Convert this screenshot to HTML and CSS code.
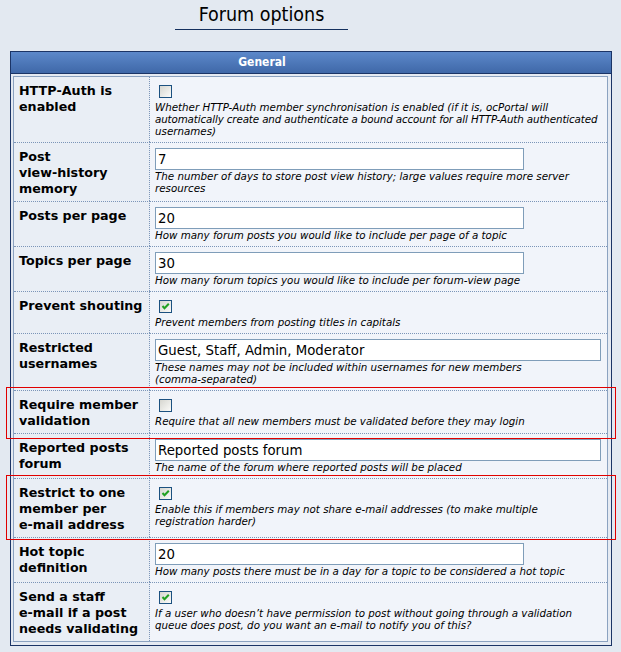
FILE: index.html
```html
<!DOCTYPE html>
<html>
<head>
<meta charset="utf-8">
<title>Forum options</title>
<link rel="stylesheet" href="styles.css">
</head>
<body>
<div class="page">
  <div class="title">Forum options</div>
  <div class="box">
    <div class="box-head">General</div>
    <div class="box-body">
      <table class="opts">
        <tr>
          <th class="label">HTTP&#8209;Auth is enabled</th>
          <td class="val">
            <span class="cb"></span>
            <div class="desc">Whether HTTP-Auth member synchronisation is enabled (if it is, ocPortal will <span class="tight">automatically create and authenticate a bound account for all HTTP-Auth authenticated</span> usernames)</div>
          </td>
        </tr>
        <tr>
          <th class="label">Post<br>view&#8209;history memory</th>
          <td class="val">
            <input class="inp" type="text" value="7">
            <div class="desc">The number of days to store post view history; large values require more server resources</div>
          </td>
        </tr>
        <tr>
          <th class="label">Posts per page</th>
          <td class="val">
            <input class="inp" type="text" value="20">
            <div class="desc">How many forum posts you would like to include per page of a topic</div>
          </td>
        </tr>
        <tr>
          <th class="label">Topics per page</th>
          <td class="val">
            <input class="inp" type="text" value="30">
            <div class="desc">How many forum topics you would like to include per forum-view page</div>
          </td>
        </tr>
        <tr>
          <th class="label">Prevent shouting</th>
          <td class="val">
            <span class="cb"><svg viewBox="0 0 11 11" width="11" height="11"><path d="M2.5 5 L4.5 7.2 L8.8 2.8" fill="none" stroke="#21a121" stroke-width="2"/></svg></span>
            <div class="desc">Prevent members from posting titles in capitals</div>
          </td>
        </tr>
        <tr>
          <th class="label">Restricted usernames</th>
          <td class="val">
            <input class="inp wide" type="text" value="Guest, Staff, Admin, Moderator">
            <div class="desc">These names may not be included within usernames for new members (comma&#8209;separated)</div>
          </td>
        </tr>
        <tr>
          <th class="label">Require member validation</th>
          <td class="val">
            <span class="cb"></span>
            <div class="desc">Require that all new members must be validated before they may login</div>
          </td>
        </tr>
        <tr>
          <th class="label">Reported posts forum</th>
          <td class="val">
            <input class="inp wide" type="text" value="Reported posts forum">
            <div class="desc">The name of the forum where reported posts will be placed</div>
          </td>
        </tr>
        <tr>
          <th class="label">Restrict to one member per e&#8209;mail address</th>
          <td class="val">
            <span class="cb"><svg viewBox="0 0 11 11" width="11" height="11"><path d="M2.5 5 L4.5 7.2 L8.8 2.8" fill="none" stroke="#21a121" stroke-width="2"/></svg></span>
            <div class="desc">Enable this if members may not share e-mail addresses (to make multiple<br>registration harder)</div>
          </td>
        </tr>
        <tr>
          <th class="label">Hot topic definition</th>
          <td class="val">
            <input class="inp" type="text" value="20">
            <div class="desc">How many posts there must be in a day for a topic to be considered a hot topic</div>
          </td>
        </tr>
        <tr>
          <th class="label">Send a staff e&#8209;mail if a post needs validating</th>
          <td class="val">
            <span class="cb"><svg viewBox="0 0 11 11" width="11" height="11"><path d="M2.5 5 L4.5 7.2 L8.8 2.8" fill="none" stroke="#21a121" stroke-width="2"/></svg></span>
            <div class="desc">If a user who doesn’t have permission to post without going through a validation<br>queue does post, do you want an e-mail to notify you of this?</div>
          </td>
        </tr>
      </table>
    </div>
  </div>
  <div class="mark mark-1"></div>
  <div class="mark mark-2"></div>
</div>
</body>
</html>
```
FILE: styles.css
```css
html, body {
  margin: 0;
  padding: 0;
}
body {
  background: #e3e9f1;
  font-family: "DejaVu Sans", Verdana, sans-serif;
  color: #000;
}
.page {
  position: relative;
  height: 652px;
  overflow: hidden;
}
.title {
  margin-left: 175px;
  width: 173px;
  text-align: center;
  font-family: "DejaVu Sans Condensed", "DejaVu Sans", sans-serif;
  font-size: 19.5px;
  line-height: 22px;
  padding: 4px 0 3px;
  border-bottom: 1px solid #14305e;
}
.box {
  margin: 21px 0 0 10px;
  width: 600px;
  border: 1px solid #1b3466;
  background: #e5eaf2;
}
.box-head {
  height: 21px;
  line-height: 21px;
  background: linear-gradient(#5c88ca, #3f68a8);
  border-bottom: 1px solid #1b3466;
  color: #fff;
  font-family: "DejaVu Sans Condensed", "DejaVu Sans", sans-serif;
  font-weight: bold;
  font-size: 12px;
  text-align: center;
  padding-right: 98px;
}
.box-body {
  padding: 2px 3px 3px 2px;
}
.opts {
  width: 100%;
  table-layout: fixed;
  border-collapse: separate;
  border-spacing: 0;
  border: 1px solid #8ba2c0;
}
.label {
  width: 136px;
  box-sizing: border-box;
  padding: 6px 5px 4px 5px;
  text-align: left;
  vertical-align: top;
  font-size: 12.7px;
  line-height: 16px;
  font-weight: bold;
  background: #e9eef5;
  border-right: 1px dotted #7b95b8;
}
.val {
  padding: 5px 3px 5px 5px;
  vertical-align: top;
  background: #f1f4fa;
}
.opts tr + tr .label,
.opts tr + tr .val {
  border-top: 1px dotted #7b95b8;
}
.cb {
  display: block;
  width: 13px;
  height: 13px;
  box-sizing: border-box;
  margin: 3px 0 3px 4px;
  border: 1px solid #1c5180;
  background: linear-gradient(135deg, #d6d6d0, #fbfbf9);
}
.cb svg {
  display: block;
}
.inp {
  display: block;
  box-sizing: border-box;
  width: 369px;
  height: 22px;
  margin: 0;
  padding: 0 2px;
  border: 1px solid #7f9db9;
  background: #fff;
  font-family: "DejaVu Sans", Verdana, sans-serif;
  font-size: 13.3px;
  color: #000;
  outline: none;
}
.inp.wide {
  width: 446px;
}
.desc {
  font-style: italic;
  font-size: 10.3px;
  line-height: 12px;
}
.tight {
  letter-spacing: -0.12px;
}
.mark {
  position: absolute;
  left: 6px;
  width: 608px;
  border: 1px solid #e00000;
}
.mark-1 {
  top: 387px;
  height: 50px;
}
.mark-2 {
  top: 475px;
  height: 63px;
}
```
